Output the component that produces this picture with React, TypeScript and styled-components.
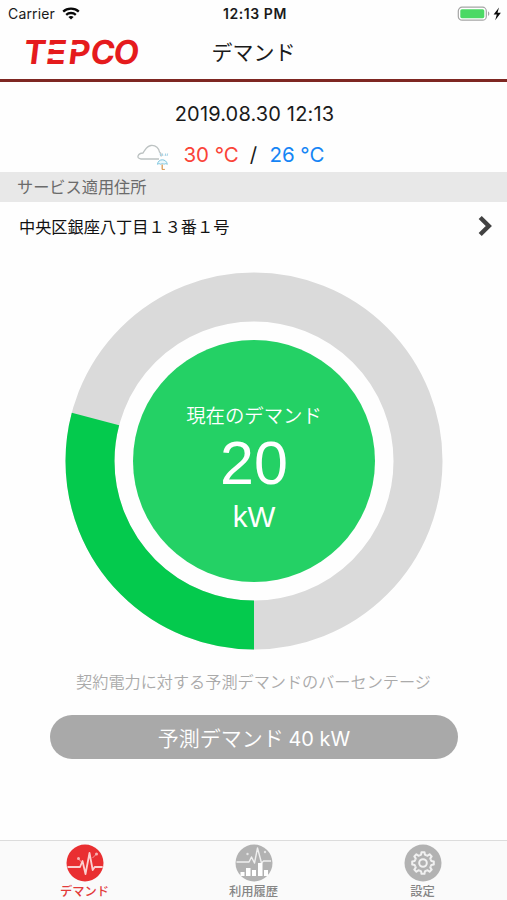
import React from "react";
import styled, { createGlobalStyle } from "styled-components";

const GlobalStyle = createGlobalStyle`
  * { box-sizing: border-box; }
  body {
    margin: 0;
    background: #fefefe;
    font-family: Inter, "Noto Sans CJK JP", sans-serif;
    color: #1a1a1a;
  }
`;

const Screen = styled.main`
  width: 507px;
  height: 900px;
  display: flex;
  flex-direction: column;
  overflow: hidden;
`;

const StatusBar = styled.div`
  height: 27px;
  flex: none;
  display: grid;
  grid-template-columns: 1fr auto 1fr;
  align-items: center;
  padding: 0 5px 0 8px;
`;

const Carrier = styled.span`
  display: flex;
  align-items: center;
  gap: 7px;
  font-size: 14px;
  letter-spacing: 0.15px;
`;

const Clock = styled.span`
  font-size: 14px;
  font-weight: 600;
  letter-spacing: 0.55px;
  white-space: nowrap;
`;

const Power = styled.span`
  display: flex;
  justify-content: flex-end;
`;

const Header = styled.header`
  height: 55px;
  flex: none;
  display: grid;
  grid-template-columns: 1fr auto 1fr;
  align-items: center;
  border-bottom: 3px solid #7e2722;
  padding: 0 24px;
`;

const Title = styled.h1`
  margin: 0 0 4px;
  font-size: 21px;
  line-height: 24px;
  font-weight: 400;
  font-family: "Noto Sans CJK JP", sans-serif;
`;

const Summary = styled.section`
  height: 90px;
  flex: none;
  display: flex;
  flex-direction: column;
  align-items: center;
  padding-top: 20px;
`;

const DateLine = styled.time`
  font-size: 20px;
  line-height: 24px;
  letter-spacing: 0.15px;
  padding-left: 2px;
`;

const Weather = styled.div`
  display: flex;
  align-items: center;
  height: 32px;
  margin-top: 12px;
  width: 234px;
  font-size: 20.5px;
`;

const Temperature = styled.span<{ $tone: string }>`
  width: 54px;
  color: ${(p) => p.$tone};
  white-space: nowrap;
  letter-spacing: -0.05px;
`;

const Slash = styled.span`
  width: 32px;
  text-align: center;
`;

const SectionLabel = styled.h2`
  height: 30px;
  flex: none;
  margin: 0;
  padding-left: 17px;
  background: #e8e8e8;
  color: #6b6b6b;
  font: 400 16.2px/29px "Noto Sans CJK JP", sans-serif;
`;

const AddressRow = styled.div`
  height: 48px;
  flex: none;
  display: flex;
  align-items: center;
  justify-content: space-between;
  padding: 0 14px 0 19px;
  font: 400 16.2px/24px "Noto Sans CJK JP", sans-serif;
  color: #111;
`;

const GaugeArea = styled.section`
  display: grid;
  place-items: center;
  flex: none;
  height: 378px;
  margin: 22px 0 0 1px;
  > * { grid-area: 1 / 1; }
`;

const Reading = styled.div`
  width: 242px;
  height: 242px;
  border-radius: 50%;
  background: #24d165;
  color: #fff;
  display: flex;
  flex-direction: column;
  align-items: center;
  padding-top: 61px;
`;

const ReadingLabel = styled.span`
  font: 350 19.4px/28px "Noto Sans CJK JP", sans-serif;
`;

const ReadingValue = styled.span`
  font: 400 61px/60px "Liberation Sans", sans-serif;
  margin-top: 4px;
`;

const ReadingUnit = styled.span`
  font: 400 29.5px/32px "Liberation Sans", sans-serif;
  margin-top: 8px;
`;

const Caption = styled.p`
  margin: 19px 0 0;
  height: 24px;
  text-align: center;
  color: #aaa;
  font: 350 16.15px/24px "Noto Sans CJK JP", sans-serif;
`;

const ForecastButton = styled.button`
  width: 408px;
  height: 44px;
  flex: none;
  margin: 22px 0 0 50px;
  border: 0;
  padding: 0;
  border-radius: 22px;
  background: #a9a9a9;
  color: #fff;
  font: 350 21px/44px "Noto Sans CJK JP", sans-serif;
`;

const ForecastValue = styled.span`
  font: 400 20px/44px Inter, sans-serif;
`;

const TabBar = styled.nav`
  height: 60px;
  flex: none;
  margin-top: auto;
  display: grid;
  grid-template-columns: repeat(3, 1fr);
  border-top: 1px solid #dcdcdc;
  background: #fafafa;
`;

const Tab = styled.a<{ $active?: boolean }>`
  display: flex;
  flex-direction: column;
  align-items: center;
  padding-top: 3px;
  color: ${(p) => (p.$active ? "#e23a3a" : "#858585")};
  font: 500 12.3px/18px "Noto Sans CJK JP", sans-serif;
  svg { display: block; }
`;

const WifiIcon = () => (
  <svg width="18" height="13" viewBox="0 0 18 13" fill="none" stroke="#080808" strokeWidth="2.3">
    <path d="M1.2 4.6C5.4.7 12.6.7 16.8 4.6" />
    <path d="M4.2 7.8c2.6-2.4 7-2.4 9.6 0" />
    <path d="M9 12.5 6.4 10c1.4-1.2 3.8-1.2 5.2 0z" fill="#080808" stroke="none" />
  </svg>
);

const BatteryIcon = () => (
  <svg width="45" height="16" viewBox="0 0 45 16">
    <rect x="1.3" y="1.2" width="28" height="13" rx="3.8" fill="#fff" stroke="#a5a5a5" strokeWidth="1.2" />
    <rect x="3.3" y="3.2" width="24" height="9" rx="1.6" fill="#4bd964" />
    <path d="M31 5.5c1.8.4 1.8 4 0 4.4z" fill="#a5a5a5" />
    <path d="M42 1.5 36.6 8.6h3.2l-1.6 5.6 5.7-7.4h-3.4z" fill="#0a0a0a" />
  </svg>
);

const LogoSvg = styled.svg`
  overflow: visible;
  margin-bottom: 2px;
`;

const Logo = () => (
  <LogoSvg width="120" height="40" viewBox="0 0 120 40" role="img" aria-label="TEPCO">
    <g transform="translate(0 31.5) skewX(-7)" fontFamily="Inter, sans-serif" fontWeight="750" fontSize="33" fill="#e51b1d">
      <text x="-1.5 21 43.5 65.500 88.500" y="0">TEPCO</text>
      <path d="M21-16.700H43M21-7.200H43" stroke="#fefefe" strokeWidth="4.200" />
      <path d="M44-16.700H51.600" stroke="#fefefe" strokeWidth="4.200" />
    </g>
  </LogoSvg>
);

const RainIcon = () => (
  <svg width="47" height="32" viewBox="0 0 47 32" fill="none">
    <path d="M22 21H4C-1 20.500 .5 15.500 6 15 9 11 9.500 8 14 7.500c5-.5 8 3 8.500 6.500 1.500 1 2 2.500 1.500 4.500" stroke="#bcc2c2" strokeWidth="1.300" />
    <path d="m23 15.500.6 2.500m1.900-2.500.3 2.500m2.800-2.500-.4 2.500m2.400-2.500-.6 2.500" stroke="#9fd0e5" strokeWidth="1" />
    <path d="M20.500 26.300c.5-6 9-6 9.800 0-1.300-.8-2.300-.8-3.200 0-1-.8-2.200-.8-3.300 0-1-.8-2.200-.8-3.300 0Z" fill="#eaf7fb" stroke="#7fc6df" strokeWidth="1" />
    <path d="M25.200 26.500v4.300c.3 1.200 2 1 2.200 0" stroke="#dda05f" strokeWidth="1.400" />
  </svg>
);

const ChevronIcon = () => (
  <svg width="15" height="22" viewBox="0 0 15 22" fill="none" stroke="#424242" strokeWidth="4.4">
    <path d="m2.200 2.500 8.600 8.500-8.600 8.500" />
  </svg>
);

const RADIUS = 164;
const LENGTH = 2 * Math.PI * RADIUS;
const SHARE = 104.8 / 360;

const Gauge = () => (
  <svg width="378" height="378" viewBox="-189 -189 378 378" fill="none" strokeWidth="49">
    <circle r={RADIUS} stroke="#dadada" />
    <circle r={RADIUS} stroke="#04ca4d" strokeDasharray={`${LENGTH * SHARE} ${LENGTH}`} transform="rotate(90)" />
  </svg>
);

const PulseIcon = () => (
  <svg width="38" height="38" viewBox="0 0 38 38" fill="none">
    <circle cx="19" cy="19" r="18.5" fill="#e92f31" />
    <path d="M1.500 23H14l2.500-6 3 13 4-21 3.200 17 2-3h8" stroke="#fbd0d0" strokeWidth="1.800" strokeLinejoin="round" />
    <circle cx="12.500" cy="14.500" r="1.500" fill="#f6b4b4" />
    <circle cx="30.500" cy="10" r="1.500" fill="#f6b4b4" />
    <path d="m12.500 15 3 3M30.500 10l-4 4" stroke="#f6b4b4" strokeWidth=".8" />
  </svg>
);

const HistoryIcon = () => (
  <svg width="38" height="38" viewBox="0 0 38 38" fill="none">
    <circle cx="19" cy="19" r="18.5" fill="#b2b2b2" />
    <path d="M1.500 18H14l2.500-5 3 6 3-15 4 15 2-2h7.500" stroke="#f0f0f0" strokeWidth="1.400" strokeLinejoin="round" />
    <path d="M5.500 28h4v4h-4zM11 24h4.500v8H11zM17 26h4v6h-4zM23 19h4.500v13H23zM29 26h4v6h-4z" fill="#fff" />
    <circle cx="12.500" cy="10" r="1.200" fill="#e5e5e5" />
    <circle cx="30" cy="8" r="1.200" fill="#e5e5e5" />
  </svg>
);

const teeth = Array.from({ length: 8 }, (_, i) => i * 45);

const SettingsIcon = () => (
  <svg width="38" height="38" viewBox="-19 -19 38 38" fill="none">
    <circle r="18.5" fill="#b2b2b2" />
    <g stroke="#f1f1f1" strokeWidth="2">
      <circle r="3.8" />
      {teeth.map((angle) => (
        <path
          key={angle}
          transform={`rotate(${angle})`}
          d="M-3.200-7.700-1.900-8.400-1.500-10.800H1.500L1.900-8.400 3.200-7.700"
          strokeLinejoin="round"
        />
      ))}
    </g>
  </svg>
);

export default function App() {
  return (
    <Screen>
      <GlobalStyle />
      <StatusBar>
        <Carrier>Carrier <WifiIcon /></Carrier>
        <Clock>12:13 PM</Clock>
        <Power><BatteryIcon /></Power>
      </StatusBar>
      <Header>
        <Logo />
        <Title>デマンド</Title>
      </Header>
      <Summary>
        <DateLine>2019.08.30 12:13</DateLine>
        <Weather>
          <RainIcon />
          <Temperature $tone="#fa4338">30 °C</Temperature>
          <Slash>/</Slash>
          <Temperature $tone="#1585f5">26 °C</Temperature>
        </Weather>
      </Summary>
      <SectionLabel>サービス適用住所</SectionLabel>
      <AddressRow>
        <span>中央区銀座八丁目１３番１号</span>
        <ChevronIcon />
      </AddressRow>
      <GaugeArea>
        <Gauge />
        <Reading>
          <ReadingLabel>現在のデマンド</ReadingLabel>
          <ReadingValue>20</ReadingValue>
          <ReadingUnit>kW</ReadingUnit>
        </Reading>
      </GaugeArea>
      <Caption>契約電力に対する予測デマンドのバーセンテージ</Caption>
      <ForecastButton>予測デマンド <ForecastValue>40 kW</ForecastValue></ForecastButton>
      <TabBar>
        <Tab $active><PulseIcon /><span>デマンド</span></Tab>
        <Tab><HistoryIcon /><span>利用履歴</span></Tab>
        <Tab><SettingsIcon /><span>設定</span></Tab>
      </TabBar>
    </Screen>
  );
}
